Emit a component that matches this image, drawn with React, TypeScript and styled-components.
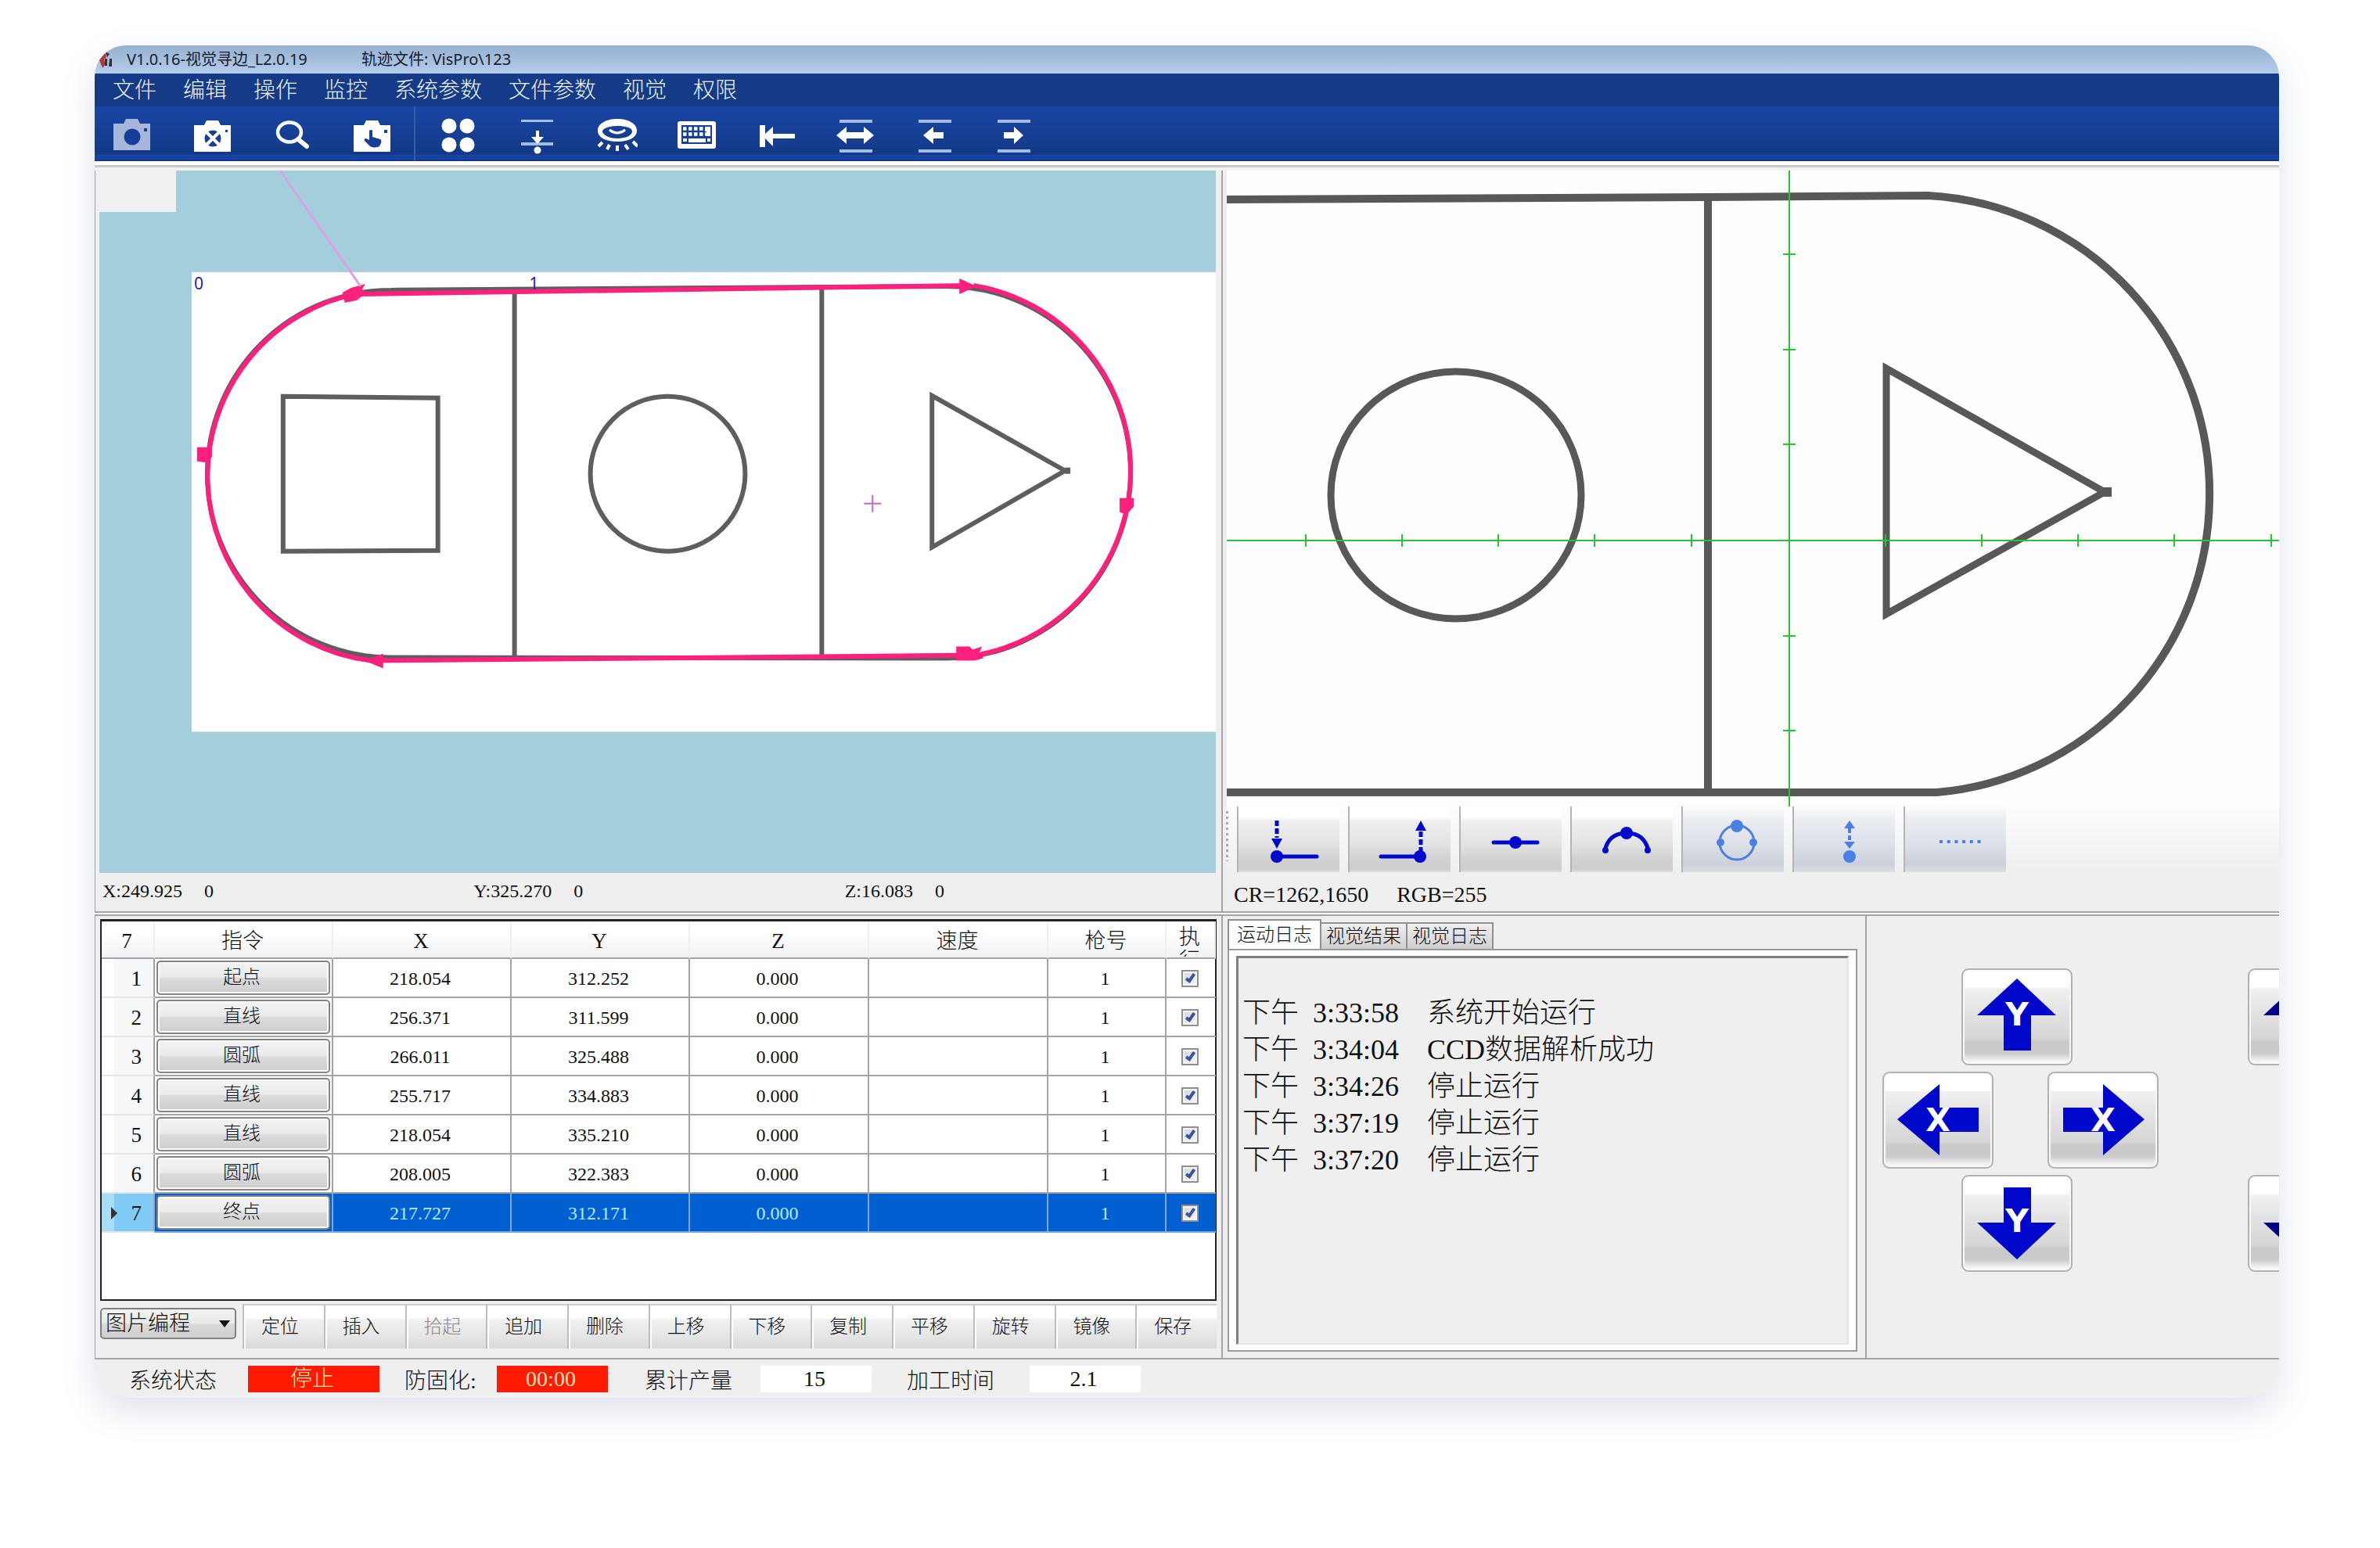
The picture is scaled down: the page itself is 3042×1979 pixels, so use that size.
import React from "react";
import styled, { createGlobalStyle, css } from "styled-components";

const serif = `"Liberation Serif", "Noto Sans CJK SC", serif`;
const sans = `"Noto Sans", "Noto Sans CJK SC", sans-serif`;
const blue = "#0008cc";
const softBlue = "#4a80e6";
const face = "#efefef";
const line = "#a3a3a3";

const GlobalStyle = createGlobalStyle`
  *, *::before, *::after { box-sizing: border-box; }
  body { margin: 0; background: #fff; color: #111; font-family: ${serif}; font-weight: 300; }
  button, select, input { font: inherit; color: inherit; margin: 0; }
  svg { display: block; }
`;

const Page = styled.div`
  padding: 58px 129px 190px 121px;
`;

const AppWindow = styled.main`
  border-radius: 40px;
  overflow: hidden;
  background: ${face};
  box-shadow: 0 16px 44px rgba(90, 110, 160, 0.2);
`;

const TitleBar = styled.header`
  display: flex;
  align-items: center;
  height: 36px;
  padding-left: 5px;
  background: linear-gradient(#96b0d0, #b5cdea);
  font: 400 20px/30px ${sans};
  color: #15202e;
  white-space: pre;
`;

const TitleText = styled.span`
  width: 300px;
  padding-left: 16px;
`;

const MenuBar = styled.nav`
  display: flex;
  gap: 34px;
  height: 42px;
  padding-left: 23px;
  background: #143a88;
`;

const MenuItem = styled.button`
  padding: 2px 0 0;
  border: 0;
  background: none;
  color: #e9f3ea;
  font-size: 28px;
  line-height: 40px;
`;

const ToolBar = styled.div`
  display: flex;
  height: 70px;
  padding-left: 21px;
  background: linear-gradient(#1946a6, #133987 62px, #1946a6 62px, #1540a0 68px, #0f2f78 70px);
`;

const ToolGroup = styled.div<{ $divided?: boolean }>`
  display: flex;
  gap: 48px;
  ${(p) =>
    p.$divided &&
    css`
      margin-left: 27px;
      padding-left: 26px;
      border-left: 2px solid #3c5a9e;
    `}
`;

const ToolButton = styled.button`
  width: 54px;
  height: 70px;
  padding: 3px 0 0;
  border: 0;
  background: none;
  color: #fff;
  &:disabled { color: #a9b6dc; }
`;

const Rule = styled.div`
  height: 12px;
  border-top: 5px solid #fff;
  background: linear-gradient(#c9c9c9 3px, #f2f2f2 3px);
`;

const Columns = styled.div`
  display: grid;
  grid-template-columns: minmax(0, 1440fr) minmax(0, 1352fr);
`;

const LeftPane = styled.section`
  border-left: 1px solid ${line};
  padding: 0 7px 0 5px;
`;

const RightPane = styled.section`
  border-left: 2px solid ${line};
  padding-left: 5px;
`;

const Canvas = styled.svg<{ $bg: string }>`
  width: 100%;
  height: auto;
  background: ${(p) => p.$bg};
`;

const AxisStatus = styled.div`
  display: grid;
  grid-template-columns: repeat(3, 1fr);
  padding-left: 4px;
  font-size: 24px;
  line-height: 46px;
`;

const AxisReading = styled.span`
  display: flex;
  gap: 28px;
`;

const SplitLine = styled.div`
  height: 6px;
  border-top: 2px solid ${line};
  border-bottom: 2px solid ${line};
  background: #fafafa;
`;

/* Program table */

const ProgramPane = styled(LeftPane)`
  padding: 4px 6px 12px;
`;

const TableFrame = styled.div`
  min-height: 488px;
  border: 2px solid #222;
  border-top-width: 3px;
  background: #fff;
`;

const ProgramTable = styled.table`
  width: 100%;
  table-layout: fixed;
  border-spacing: 0;
  text-align: center;
`;

const Col = styled.col<{ $w: number }>`
  width: ${(p) => p.$w}px;
`;

const HeadCell = styled.th`
  height: 48px;
  padding: 3px 2px 0 0;
  border-right: 2px solid #eceef0;
  border-bottom: 2px solid ${line};
  background: linear-gradient(#fff 30%, #eff1f4);
  font-size: 27px;
  font-weight: 300;
  line-height: 30px;
`;

const ClippedHead = styled.div`
  width: 27px;
  height: 40px;
  margin: 0 auto;
  overflow: hidden;
  word-break: break-all;
`;

const IndexCell = styled.th<{ $active: boolean }>`
  padding: 0;
  border-right: 2px solid ${line};
  border-bottom: 2px solid #e2e6ea;
  background: ${(p) =>
    p.$active
      ? "linear-gradient(90deg, #a9dcf6 16px, #7fcbf6 16px)"
      : "linear-gradient(90deg, #fff 16px, #f5f7f9 16px)"};
  font-size: 27px;
  font-weight: 400;
`;

const IndexInner = styled.div`
  display: flex;
  align-items: center;
  justify-content: space-between;
  padding: 2px 15px 0 11px;
`;

const Cell = styled.td<{ $fill?: boolean }>`
  height: 50px;
  padding: ${(p) => (p.$fill ? "0 2px" : "2px 4px 0 0")};
  border-right: 2px solid ${line};
  border-bottom: 2px solid ${line};
  font-size: 24px;
  &:last-child { border-right: 0; }
`;

const Row = styled.tr<{ $active: boolean }>`
  ${(p) =>
    p.$active &&
    css`
      background: #0060d2;
      ${Cell} { color: #b4ecff; border-color: #7ea6d8; }
    `}
`;

const CommandButton = styled.button`
  display: block;
  width: 100%;
  height: 44px;
  padding: 0 4px 2px 0;
  border: 2px solid #858585;
  border-radius: 5px;
  background: linear-gradient(#f3f3f3, #ebebeb 48%, #dcdcdc 52%, #cdcdcd);
  box-shadow: inset 0 0 0 2px #fafafa;
  color: #111;
  font-size: 24px;
  line-height: 34px;
`;

const Check = styled.input`
  appearance: none;
  display: block;
  width: 22px;
  height: 22px;
  margin: 0 auto;
  border: 2px solid #8e8f8f;
  background: linear-gradient(135deg, #cfd4da, #f8f8f8);
  box-shadow: inset 0 0 0 2px #f4f4f4;
  &:checked::after {
    content: "";
    display: block;
    width: 7px;
    height: 13px;
    margin: 1px 0 0 6px;
    border: solid #3d539c;
    border-width: 0 4px 4px 0;
    transform: rotate(35deg);
  }
`;

const EditBar = styled.div`
  display: flex;
  align-items: flex-start;
  padding-top: 4px;
`;

const ModeBox = styled.div`
  display: grid;
  width: 174px;
  margin: 5px 8px 0 0;
  align-items: center;
  > * { grid-area: 1 / 1; }
  > svg { justify-self: end; margin-right: 8px; pointer-events: none; }
`;

const ModeSelect = styled.select`
  appearance: none;
  width: 100%;
  height: 40px;
  padding: 0 5px;
  border: 2px solid #808080;
  border-radius: 5px;
  background: linear-gradient(#f2f2f2, #e9e9e9 50%, #dadada 52%, #cfcfcf);
  font-size: 27px;
  line-height: 34px;
`;

const EditButton = styled.button`
  flex: 1;
  height: 57px;
  padding: 0 10px 6px 0;
  border: 0;
  border-top: 2px solid #cfcfcf;
  border-left: 2px solid #bdbdbd;
  background: linear-gradient(#fff 16px, #f0f0f0 18px, #e6e6e6 38px, #d9d9d9);
  box-shadow: inset 2px 0 #fff;
  font-size: 24px;
  &:disabled { color: #8a8a8a; }
`;

/* Camera side */

const DrawBar = styled.div`
  display: flex;
  gap: 11px;
  height: 84px;
  padding-left: 1px;
  background: linear-gradient(#fdfdfd, ${face});
`;

const Grip = styled.span`
  width: 3px;
  height: 64px;
  margin: 6px 0 0 -2px;
  background: repeating-linear-gradient(#aaa 0 3px, transparent 3px 7px);
`;

const DrawButton = styled.button`
  width: 131px;
  height: 84px;
  padding: 0;
  border: 0;
  border-left: 2px solid #b4b4b4;
  background: linear-gradient(#fff 14px, #efefef 18px, #e3e3e3 48px, #d2d2d2 66px, #cdcdcd 80px, #e0e0e0);
  color: ${blue};
  &:disabled {
    color: ${softBlue};
    background: linear-gradient(#fbfcfd, #e9ecf0 18px, #dde1e8 48px, #cbd1da 74px, #dcdfe4);
  }
`;

const PixelStatus = styled.div`
  display: flex;
  gap: 36px;
  padding: 7px 0 0 9px;
  font-size: 28px;
  line-height: 43px;
`;

const LowerRight = styled.div`
  display: grid;
  grid-template-columns: minmax(0, 821fr) minmax(0, 529fr);
  border-left: 2px solid ${line};
`;

const LogPane = styled.section`
  display: flex;
  flex-direction: column;
  padding: 4px 10px 8px 6px;
`;

const Tabs = styled.div`
  display: flex;
  align-items: flex-end;
  height: 38px;
`;

const Tab = styled.button<{ $current?: boolean }>`
  height: ${(p) => (p.$current ? 38 : 34)}px;
  padding: 0 ${(p) => (p.$current ? 10 : 6)}px;
  border: 2px solid #8f8f8f;
  border-bottom: 0;
  border-left-width: ${(p) => (p.$current ? 2 : 0)}px;
  background: ${(p) => (p.$current ? "#fff" : "linear-gradient(#f0f0f0, #cfcfcf)")};
  font-size: 24px;
  line-height: 32px;
`;

const TabPanel = styled.div`
  flex: 1;
  padding: 7px 9px;
  border: 2px solid #9a9a9a;
  background: #fff;
`;

const LogBox = styled.ol`
  height: 100%;
  margin: 0;
  padding: 47px 4px 0 5px;
  border: 2px solid #e4e4e4;
  border-top: 3px solid #808080;
  border-left: 3px solid #808080;
  background: ${face};
  list-style: none;
`;

const LogLine = styled.li`
  display: grid;
  grid-template-columns: 72px 128px 1fr;
  column-gap: 18px;
  font-size: 36px;
  line-height: 47px;
  height: 47px;
  white-space: nowrap;
`;

const JogPane = styled.section`
  display: flex;
  flex-direction: column;
  gap: 8px;
  padding: 67px 0 0 20px;
  border-left: 2px solid ${line};
  overflow: hidden;
`;

const JogRow = styled.div<{ $indent: number; $gap: number }>`
  display: flex;
  gap: ${(p) => p.$gap}px;
  padding-left: ${(p) => p.$indent}px;
`;

const JogButton = styled.button`
  flex: none;
  width: 142px;
  height: 124px;
  padding: 0;
  border: 2px solid #b2b2b2;
  border-radius: 9px;
  background: linear-gradient(#fff 22px, #f0f0f0 24px, #e2e2e2 55px, #d6d6d6 88px, #cacaca 92px, #cacaca 106px, #f2f2f2 116px);
  box-shadow: inset 0 0 0 2px #f8f8f8;
  > svg { margin: -2px; }
`;

const StatusBar = styled.footer`
  display: grid;
  grid-template-columns: 152px 200px 118px 189px 148px 187px 157px 142px;
  align-items: center;
  justify-items: start;
  height: 51px;
  padding-left: 44px;
  border-top: 2px solid ${line};
  background: ${face};
  font-size: 28px;
`;

const Value = styled.output<{ $alert?: boolean; $w: number }>`
  width: ${(p) => p.$w}px;
  height: 34px;
  padding-right: 4px;
  line-height: 34px;
  text-align: center;
  background: ${(p) => (p.$alert ? "#ff1a00" : "#fff")};
  color: ${(p) => (p.$alert ? "#ffe0b8" : "#111")};
`;

/* Icons, drawn in a 54 x 48 box */

const ToolIcon = ({ children }: { children: React.ReactNode }) => (
  <svg width="54" height="48" viewBox="0 0 54 48" fill="currentColor" aria-hidden="true">
    {children}
  </svg>
);

const cameraBody = "M4 9h13l3-6h15l3 6h13v34H4z";
const dark = "#173f97";
const pale = "#a5bbe0";

const tools: { name: string; off?: boolean; icon: React.ReactNode }[] = [
  {
    name: "相机",
    off: true,
    icon: (
      <>
        <path d={cameraBody} transform="translate(-1 0)" />
        <circle cx="27" cy="26" r="10.5" fill={dark} />
        <rect x="42" y="15" width="4" height="4" fill={dark} />
      </>
    ),
  },
  {
    name: "关闭相机",
    icon: (
      <>
        <path d={cameraBody} transform="translate(0 2)" />
        <circle cx="28" cy="28" r="10.5" fill={dark} />
        <path d="M19 19l18 18M37 19L19 37" stroke="#fff" strokeWidth="4" />
        <rect x="44" y="17" width="3" height="3" fill={dark} />
      </>
    ),
  },
  {
    name: "查找",
    icon: (
      <>
        <ellipse cx="24" cy="20" rx="15" ry="12.5" fill="none" stroke="#fff" strokeWidth="4.5" />
        <path d="M35 29l11 9" stroke="#fff" strokeWidth="6" strokeLinecap="round" />
      </>
    ),
  },
  {
    name: "手动拍照",
    icon: (
      <>
        <path d={cameraBody} transform="translate(0 2)" />
        <path d="M24 18q2.5-2 4 0v8l10 3q2 1 1 5l-2 4q-7 3-12 0l-7-7q-1-3 2-3l4 2z" fill={dark} />
        <rect x="43" y="17" width="4" height="4" fill={dark} />
      </>
    ),
  },
];

const motions: { name: string; icon: React.ReactNode }[] = [
  {
    name: "阵列",
    icon: (
      <>
        <circle cx="17" cy="12" r="9.5" />
        <circle cx="40" cy="12" r="9.5" />
        <circle cx="17" cy="36" r="9.5" />
        <circle cx="40" cy="36" r="9.5" />
      </>
    ),
  },
  {
    name: "下降",
    icon: (
      <>
        <path d="M7 4h41v3H7zM7 33h41v4H7z" fill={pale} />
        <path d="M26 18h4v8h6l-8 9-8-9h6z" />
        <circle cx="28" cy="43" r="4.5" />
      </>
    ),
  },
  {
    name: "光源",
    icon: (
      <>
        <path
          fillRule="evenodd"
          d="M28 3c14 0 25 6 25 15S42 32 28 32 3 27 3 18 14 3 28 3zM28 12c-10 0-19 3-19 7s8 9 19 9 19-4 19-9-9-7-19-7z"
        />
        <path d="M18 17q10 8 20 0" fill="none" stroke="#fff" strokeWidth="3" />
        <path
          d="M9 33l-5 5M18 36l-3 6M28 37v7M38 36l4 6M48 32l6 6"
          stroke="#fff"
          strokeWidth="4"
        />
      </>
    ),
  },
  {
    name: "键盘",
    icon: (
      <>
        <rect x="3" y="6" width="49" height="35" rx="3" />
        <rect x="8" y="11" width="39" height="24" fill={dark} />
        <path
          d="M10 15.500h26M10 22.500h30"
          stroke="#fff"
          strokeWidth="4.500"
          strokeDasharray="4.500 2.500"
        />
        <path d="M38 13h7v12h-5v-6h-2zM10 28h5v4h-5zM17 28h22v5H17zM41 28h4v4h-4z" />
      </>
    ),
  },
  { name: "回原点", icon: <path d="M6 11h7v11l10-9v9h28v6H23v10L13 28v11H6z" /> },
  {
    name: "左右移动",
    icon: (
      <>
        <path d="M6 4h42v4H6zM6 42h42v4H6z" fill={pale} />
        <path d="M2 24l13-11v7h22v-7l13 11-13 11v-7H15v7z" />
      </>
    ),
  },
  {
    name: "左移",
    icon: (
      <>
        <path d="M5 4h42v4H5zM5 42h42v4H5z" fill={pale} />
        <path d="M11 24l13-11v7h13v8H24v7z" />
      </>
    ),
  },
  {
    name: "右移",
    icon: (
      <>
        <path d="M4 4h42v4H4zM4 42h42v4H4z" fill={pale} />
        <path d="M37 24L25 13v7H12v8h13v7z" />
      </>
    ),
  },
];

const drawTools: { name: string; off?: boolean; icon: React.ReactNode }[] = [
  {
    name: "起点",
    icon: (
      <>
        <path d="M49 18v22" strokeDasharray="7 3" />
        <path d="M49 54l-7-13h14z" strokeWidth="0" />
        <path d="M49 64h51" strokeLinecap="round" />
        <circle cx="49" cy="64" r="8" strokeWidth="0" />
      </>
    ),
  },
  {
    name: "终点",
    icon: (
      <>
        <path d="M91 59V32" strokeDasharray="7 3" />
        <path d="M91 18l-7 13h14z" strokeWidth="0" />
        <path d="M40 64h51" strokeLinecap="round" />
        <circle cx="90" cy="64" r="8" strokeWidth="0" />
      </>
    ),
  },
  {
    name: "直线",
    icon: (
      <>
        <path d="M42 46h56" strokeLinecap="round" />
        <circle cx="70" cy="46" r="8" strokeWidth="0" />
      </>
    ),
  },
  {
    name: "圆弧",
    icon: (
      <>
        <path d="M42 57Q47 34 70 34T98 57" fill="none" />
        <circle cx="70" cy="34" r="8" strokeWidth="0" />
        <circle cx="43" cy="56" r="4" strokeWidth="0" />
        <circle cx="97" cy="56" r="4" strokeWidth="0" />
      </>
    ),
  },
  {
    name: "整圆",
    off: true,
    icon: (
      <>
        <circle cx="69" cy="46" r="22" fill="none" strokeWidth="3" />
        <circle cx="69" cy="25" r="8" strokeWidth="0" />
        <circle cx="48" cy="46" r="5" strokeWidth="0" />
        <circle cx="90" cy="46" r="5" strokeWidth="0" />
      </>
    ),
  },
  {
    name: "孤立点",
    off: true,
    icon: (
      <>
        <path d="M71 28v16" strokeDasharray="6 3" strokeWidth="4" />
        <path d="M71 18l-7 10h14zM71 54l-7-9h14z" strokeWidth="0" />
        <circle cx="71" cy="64" r="8" strokeWidth="0" />
      </>
    ),
  },
  {
    name: "更多",
    off: true,
    icon: <path d="M44 45h53" strokeWidth="4" strokeDasharray="4 5.700" />,
  },
];

const rows = [
  ["起点", "218.054", "312.252"],
  ["直线", "256.371", "311.599"],
  ["圆弧", "266.011", "325.488"],
  ["直线", "255.717", "334.883"],
  ["直线", "218.054", "335.210"],
  ["圆弧", "208.005", "322.383"],
  ["终点", "217.727", "312.171"],
];

const edits = ["定位", "插入", "拾起", "追加", "删除", "上移", "下移", "复制", "平移", "旋转", "镜像", "保存"];

const logs = [
  ["3:33:58", "系统开始运行"],
  ["3:34:04", "CCD数据解析成功"],
  ["3:34:26", "停止运行"],
  ["3:37:19", "停止运行"],
  ["3:37:20", "停止运行"],
];

const arrows = {
  up: "M71 13L121 60H89V105H54V60H20z",
  down: "M71 108L121 61H89V16H54V61H20z",
  left: "M19 61L73 16V46H123V77H73V107z",
  right: "M124 61L71 16V46H20V77H71V107z",
};

const Jog = ({ dir, axis }: { dir: keyof typeof arrows; axis?: string }) => (
  <JogButton aria-label={`${axis ?? "Z"} ${dir}`}>
    <svg width="142" height="124" viewBox="0 0 142 124" aria-hidden="true">
      <path d={arrows[dir]} fill={axis ? blue : "#00008b"} />
      {axis && (
        <text
          x="71"
          y={dir === "left" || dir === "right" ? 76 : 73}
          textAnchor="middle"
          fontFamily="DejaVu Sans"
          fontWeight="700"
          fontSize="41"
          fill="#fff"
        >
          {axis}
        </text>
      )}
    </svg>
  </JogButton>
);

const pink = "#ff1f7d";

const PathCanvas = () => (
  <Canvas $bg="#a3cedb" viewBox="127 218 1428 899" role="img" aria-label="轨迹视图">
    <rect x="127" y="218" width="98" height="53" fill="#f0f0f0" />
    <rect x="245" y="348" width="1310" height="588" fill="#fff" />
    <g fill="none" stroke="#5e5e5e" strokeWidth="6">
      <path d="M500 371L1210 366A236 238 0 0 1 1210 842L500 841A235 235 0 0 1 500 371" />
      <path d="M658 374V840M1051 368V840" />
      <path d="M362 507L460 508L560 509V704L362 705z" />
      <circle cx="854" cy="606" r="99" />
      <path d="M1192 506V700L1362 602z" />
      <path d="M1362 602h7" strokeWidth="8" />
    </g>
    <g fill="none" stroke={pink} strokeWidth="6">
      <path d="M462 376L1240 365" />
      <path d="M1245 365A240 240 0 0 1 1254 837" />
      <path d="M1254 838L477 845" />
      <path d="M474 845A238 238 0 0 1 459 375" />
    </g>
    <path
      fill={pink}
      d="M1227 356L1249 366L1227 376zM490 836L466 845L490 855zM252 572H271V584L267 592L252 590zM1432 637H1450V648L1441 658L1432 655zM1223 827H1240L1244 831L1256 827L1252 836L1258 842L1246 845H1223zM449 368L467 363L463 370L469 374L456 384L441 387L438 374z"
    />
    <path d="M358 218L461 366" stroke="#dba0e6" strokeWidth="3" />
    <path d="M1105 644h22M1116 633v22" stroke="#c266c8" strokeWidth="2" />
    <g fill="#2020b8" fontFamily="Noto Sans" fontSize="21" fontWeight="400">
      <text x="248" y="370">0</text>
      <text x="677" y="370">1</text>
    </g>
  </Canvas>
);

const xTicks = [1669, 1792, 1915, 2038, 2162, 2410, 2533, 2656, 2779, 2903];
const yTicks = [325, 447, 568, 813, 934];

const CameraCanvas = () => (
  <Canvas $bg="#fefefe" viewBox="1568 218 1345 813" role="img" aria-label="相机视图">
    <g fill="none" stroke="#585858" strokeWidth="10">
      <path d="M1568 255L2183 252L2464 250A381 381 0 0 1 2824 640A381 381 0 0 1 2475 1013H1568" />
      <path d="M2183 252V1013" />
      <ellipse cx="1861" cy="633" rx="160" ry="158" strokeWidth="9" />
      <path d="M2411 471V785L2690 629z" strokeWidth="9" />
      <path d="M2684 629h15" strokeWidth="12" />
    </g>
    <g stroke="#25c535" strokeWidth="2">
      <path d="M1568 691H2913M2287 218V1031" />
      {xTicks.map((x) => (
        <path key={x} d={`M${x} 683v16`} />
      ))}
      {yTicks.map((y) => (
        <path key={y} d={`M2279 ${y}h16`} />
      ))}
    </g>
  </Canvas>
);

export default function App() {
  return (
    <Page>
      <GlobalStyle />
      <AppWindow>
        <TitleBar>
          <svg width="20" height="30" viewBox="0 0 20 30" aria-hidden="true">
            <path d="M3 8l6-2 1 6-3 3 2 6-4 5-4-10z" fill="#b0393c" />
            <path d="M9 5l5 3-3 4zM14 14h3v10h-4zM8 14h3v9H8z" fill="#3c2e3a" />
          </svg>
          <TitleText>V1.0.16-视觉寻边_L2.0.19</TitleText>
          <TitleText>轨迹文件: VisPro\123</TitleText>
        </TitleBar>
        <MenuBar>
          {["文件", "编辑", "操作", "监控", "系统参数", "文件参数", "视觉", "权限"].map((m) => (
            <MenuItem key={m}>{m}</MenuItem>
          ))}
        </MenuBar>
        <ToolBar>
          <ToolGroup>
            {tools.map((t) => (
              <ToolButton key={t.name} aria-label={t.name} disabled={t.off}>
                <ToolIcon>{t.icon}</ToolIcon>
              </ToolButton>
            ))}
          </ToolGroup>
          <ToolGroup $divided>
            {motions.map((t) => (
              <ToolButton key={t.name} aria-label={t.name}>
                <ToolIcon>{t.icon}</ToolIcon>
              </ToolButton>
            ))}
          </ToolGroup>
        </ToolBar>
        <Rule />

        <Columns>
          <LeftPane>
            <PathCanvas />
            <AxisStatus>
              {["X:249.925", "Y:325.270", "Z:16.083"].map((a) => (
                <AxisReading key={a}>
                  <span>{a}</span>
                  <span>0</span>
                </AxisReading>
              ))}
            </AxisStatus>
          </LeftPane>
          <RightPane>
            <CameraCanvas />
            <DrawBar>
              <Grip />
              {drawTools.map((t) => (
                <DrawButton key={t.name} aria-label={t.name} disabled={t.off}>
                  <svg
                    width="129"
                    height="84"
                    viewBox="0 0 129 84"
                    fill="currentColor"
                    stroke="currentColor"
                    strokeWidth="5"
                    aria-hidden="true"
                  >
                    {t.icon}
                  </svg>
                </DrawButton>
              ))}
            </DrawBar>
            <PixelStatus>
              <span>CR=1262,1650</span>
              <span>RGB=255</span>
            </PixelStatus>
          </RightPane>
        </Columns>
        <SplitLine />

        <Columns>
          <ProgramPane>
            <TableFrame>
              <ProgramTable>
                <colgroup>
                  {[68, 228, 228, 228, 229, 229, 151, 63].map((w, i) => (
                    <Col key={i} $w={w} />
                  ))}
                </colgroup>
                <thead>
                  <tr>
                    {["7", "指令", "X", "Y", "Z", "速度", "枪号"].map((h) => (
                      <HeadCell key={h} scope="col">
                        {h}
                      </HeadCell>
                    ))}
                    <HeadCell scope="col">
                      <ClippedHead>执行</ClippedHead>
                    </HeadCell>
                  </tr>
                </thead>
                <tbody>
                  {rows.map(([cmd, x, y], i) => {
                    const active = i === 6;
                    return (
                      <Row key={i} $active={active}>
                        <IndexCell scope="row" $active={active}>
                          <IndexInner>
                            <svg width="10" height="18" viewBox="0 0 10 18" aria-hidden="true">
                              {active && <path d="M1 1l8 8-8 8z" fill="#333" />}
                            </svg>
                            {i + 1}
                          </IndexInner>
                        </IndexCell>
                        <Cell $fill>
                          <CommandButton>{cmd}</CommandButton>
                        </Cell>
                        <Cell>{x}</Cell>
                        <Cell>{y}</Cell>
                        <Cell>0.000</Cell>
                        <Cell />
                        <Cell>1</Cell>
                        <Cell>
                          <Check type="checkbox" defaultChecked aria-label={`执行 ${i + 1}`} />
                        </Cell>
                      </Row>
                    );
                  })}
                </tbody>
              </ProgramTable>
            </TableFrame>
            <EditBar>
              <ModeBox>
                <ModeSelect aria-label="编程模式" defaultValue="图片编程">
                  <option>图片编程</option>
                </ModeSelect>
                <svg width="14" height="9" viewBox="0 0 14 9" aria-hidden="true">
                  <path d="M0 0h14L7 9z" fill="#111" />
                </svg>
              </ModeBox>
              {edits.map((e) => (
                <EditButton key={e} disabled={e === "拾起"}>
                  {e}
                </EditButton>
              ))}
            </EditBar>
          </ProgramPane>

          <LowerRight>
            <LogPane>
              <Tabs role="tablist">
                <Tab role="tab" aria-selected="true" $current>
                  运动日志
                </Tab>
                <Tab role="tab">视觉结果</Tab>
                <Tab role="tab">视觉日志</Tab>
              </Tabs>
              <TabPanel role="tabpanel">
                <LogBox>
                  {logs.map(([time, msg]) => (
                    <LogLine key={time}>
                      <span>下午</span>
                      <time>{time}</time>
                      <span>{msg}</span>
                    </LogLine>
                  ))}
                </LogBox>
              </TabPanel>
            </LogPane>
            <JogPane>
              <JogRow $indent={101} $gap={224}>
                <Jog dir="up" axis="Y" />
                <Jog dir="up" />
              </JogRow>
              <JogRow $indent={0} $gap={69}>
                <Jog dir="left" axis="X" />
                <Jog dir="right" axis="X" />
              </JogRow>
              <JogRow $indent={101} $gap={224}>
                <Jog dir="down" axis="Y" />
                <Jog dir="down" />
              </JogRow>
            </JogPane>
          </LowerRight>
        </Columns>

        <StatusBar>
          <label htmlFor="state">系统状态</label>
          <Value id="state" $alert $w={168}>
            停止
          </Value>
          <label htmlFor="cure">防固化:</label>
          <Value id="cure" $alert $w={142}>
            00:00
          </Value>
          <label htmlFor="count">累计产量</label>
          <Value id="count" $w={142}>
            15
          </Value>
          <label htmlFor="cycle">加工时间</label>
          <Value id="cycle" $w={142}>
            2.1
          </Value>
        </StatusBar>
      </AppWindow>
    </Page>
  );
}
